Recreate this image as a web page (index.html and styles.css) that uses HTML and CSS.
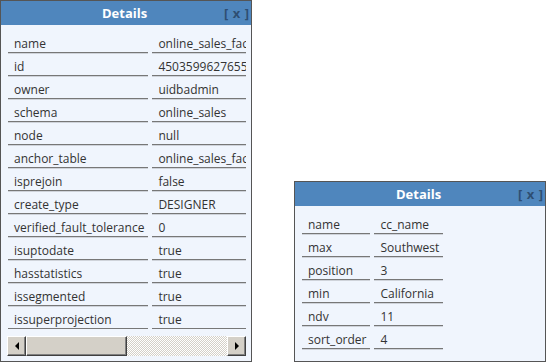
FILE: index.html
```html
<!doctype html>
<html lang="en">
<head>
  <meta charset="utf-8" />
  <title>Details</title>
  <link rel="stylesheet" href="styles.css">
</head>
<body>
  <div class="panel tall">
    <div class="head">
      <div class="title">Details</div>
      <div class="close">[ x ]</div>
    </div>
    <div class="body">
      <div class="view">
        <div class="props">
          <div class="k">name</div><div class="v">online_sales_fact</div>
          <div class="k">id</div><div class="v">45035996276555680</div>
          <div class="k">owner</div><div class="v">uidbadmin</div>
          <div class="k">schema</div><div class="v">online_sales</div>
          <div class="k">node</div><div class="v">null</div>
          <div class="k">anchor_table</div><div class="v">online_sales_fact</div>
          <div class="k">isprejoin</div><div class="v">false</div>
          <div class="k">create_type</div><div class="v">DESIGNER</div>
          <div class="k">verified_fault_tolerance</div><div class="v">0</div>
          <div class="k">isuptodate</div><div class="v">true</div>
          <div class="k">hasstatistics</div><div class="v">true</div>
          <div class="k">issegmented</div><div class="v">true</div>
          <div class="k">issuperprojection</div><div class="v">true</div>
        </div>
      </div>
      <div class="hscroll">
        <div class="btn"><span class="arr left"></span></div>
        <div class="thumb"></div>
        <div class="track"></div>
        <div class="btn"><span class="arr right"></span></div>
      </div>
    </div>
  </div>

  <div class="panel short">
    <div class="head">
      <div class="title">Details</div>
      <div class="close">[ x ]</div>
    </div>
    <div class="body">
      <div class="props">
        <div class="k">name</div><div class="v">cc_name</div>
        <div class="k">max</div><div class="v">Southwest</div>
        <div class="k">position</div><div class="v">3</div>
        <div class="k">min</div><div class="v">California</div>
        <div class="k">ndv</div><div class="v">11</div>
        <div class="k">sort_order</div><div class="v">4</div>
      </div>
    </div>
  </div>
</body>
</html>
```

FILE: styles.css
```css
html, body { margin:0; height:100%; }
body {
  display:flex; justify-content:space-between; align-items:flex-end;
  background:#fff; color:#333;
  font-family:"Open Sans", "Liberation Sans", sans-serif; font-size:12px;
}
.panel {
  width:252px; box-sizing:border-box;
  border:1px solid #555; background:#f0f5fd;
}
.head {
  display:flex; align-items:center; height:24px;
  background:#4f86bd;
}
.title { flex:1; text-align:center; color:#fff; font-weight:bold; font-size:13px; padding-left:24px; }
.close { color:#2e4e72; font-weight:bold; font-size:13px; padding-right:2px; word-spacing:1px; }

.body { padding:5px 5px 5px 6px; }
.short .body { padding-bottom:12px; }
.view { overflow:hidden; }

.props {
  display:grid; grid-template-columns:max-content max-content;
  column-gap:4px; padding-left:1px; width:max-content;
}
.k, .v {
  height:23px; line-height:18px; padding:5px 4px 0 6px; box-sizing:border-box;
  border-bottom:1px solid #777; box-shadow:0 1px 0 #cfd3da;
  white-space:nowrap;
}

/* fake horizontal scrollbar */
.hscroll { display:flex; height:20px; margin-top:7px; }
.btn, .thumb {
  box-sizing:border-box; background:#d4d0c8;
  border:1px solid; border-color:#fff #404040 #404040 #fff;
  box-shadow:inset -1px -1px 0 #808080;
}
.btn { width:19px; display:flex; align-items:center; justify-content:center; }
.thumb { width:101px; }
.track {
  flex:1;
  background:repeating-conic-gradient(#fff 0 25%, #d4d0c8 0 50%) 0 0/2px 2px;
}
.arr { width:0; height:0; border-top:4px solid transparent; border-bottom:4px solid transparent; }
.arr.left { border-right:4px solid #000; }
.arr.right { border-left:4px solid #000; }
```
